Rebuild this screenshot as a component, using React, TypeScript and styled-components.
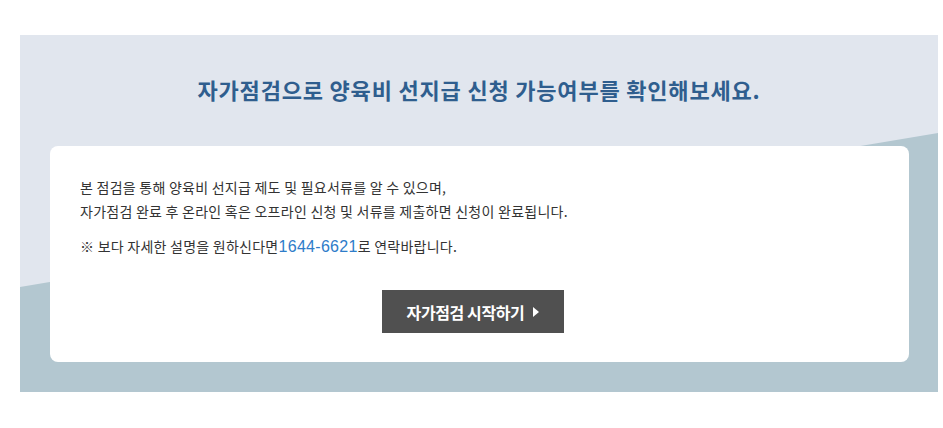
import styled, { createGlobalStyle } from 'styled-components'

const GlobalStyle = createGlobalStyle`
    body {
        margin: 0;
        background: #ffffff;
        font-family: "Noto Sans CJK KR", "Noto Sans", sans-serif;
    }
`

const Section = styled.section`
    position: relative;
    margin: 35px 0 0 20px;
    width: 918px;
    height: 357px;
    background-color: #e1e6ee;
    overflow: hidden;

    &::before {
        content: '';
        position: absolute;
        inset: 0;
        background-color: #b3c7d0;
        clip-path: polygon(0 252px, 100% 98px, 100% 100%, 0 100%);
    }
`

const Inner = styled.div`
    position: relative;
    padding-top: 39px;
`

const Titulo = styled.h2`
    margin: 0 0 41px;
    height: 31px;
    line-height: 31px;
    text-align: center;
    font-size: 22px;
    font-weight: 700;
    letter-spacing: 0.8px;
    color: #2f5e8e;
`

const Card = styled.div`
    margin: 0 29px 0 30px;
    height: 216px;
    box-sizing: border-box;
    padding: 29px 30px;
    background-color: #ffffff;
    border-radius: 8px;
`

const Texto = styled.p<{ $linhas: number }>`
    margin: 0;
    height: ${(p) => p.$linhas * 24}px;
    font-size: 14px;
    line-height: 24px;
    letter-spacing: 0.25px;
    color: #333333;

    & + & {
        margin-top: 11px;
    }
`

const Telefone = styled.span`
    font-family: "Liberation Sans", Arial, sans-serif;
    font-size: 16px;
    line-height: 1;
    letter-spacing: 0.3px;
    color: #2e7cc9;
`

const Botoes = styled.div`
    display: flex;
    justify-content: center;
    padding-right: 13px;
    margin-top: 32px;
`

const Botao = styled.button`
    display: flex;
    align-items: center;
    justify-content: center;
    gap: 9px;
    width: 182px;
    height: 43px;
    padding: 0;
    border: none;
    background-color: #505050;
    color: #ffffff;
    font-family: inherit;
    font-size: 16px;
    font-weight: 700;
    letter-spacing: -0.4px;
    cursor: pointer;
`

const Seta = styled.span`
    width: 0;
    height: 0;
    border-top: 5px solid transparent;
    border-bottom: 5px solid transparent;
    border-left: 6px solid #ffffff;
    margin-top: 1px;
`

function App() {
    return (
        <>
            <GlobalStyle />
            <Section>
                <Inner>
                    <Titulo>자가점검으로 양육비 선지급 신청 가능여부를 확인해보세요.</Titulo>
                    <Card>
                        <Texto $linhas={2}>
                            본 점검을 통해 양육비 선지급 제도 및 필요서류를 알 수 있으며,
                            <br />
                            자가점검 완료 후 온라인 혹은 오프라인 신청 및 서류를 제출하면 신청이 완료됩니다.
                        </Texto>
                        <Texto $linhas={1}>
                            ※ 보다 자세한 설명을 원하신다면<Telefone>1644-6621</Telefone>로 연락바랍니다.
                        </Texto>
                        <Botoes>
                            <Botao>
                                자가점검 시작하기
                                <Seta />
                            </Botao>
                        </Botoes>
                    </Card>
                </Inner>
            </Section>
        </>
    )
}

export default App
